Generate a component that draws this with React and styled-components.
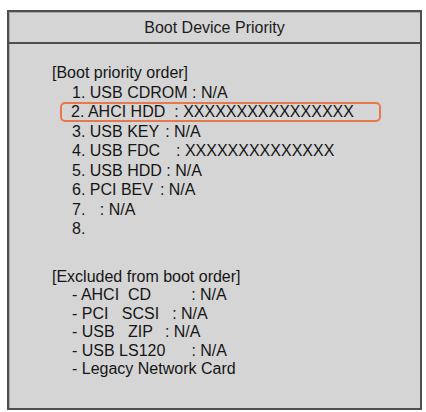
import styled, { createGlobalStyle } from "styled-components";

const GlobalStyle = createGlobalStyle`
  html, body {
    margin: 0;
    padding: 0;
    background: #fff;
  }

  body {
    font-family: "Liberation Sans", Arial, sans-serif;
  }
`;

const bootOrder = [
  { name: "1. USB CDROM", value: ": N/A", gap: 4.5 },
  { name: "2. AHCI HDD", value: ": XXXXXXXXXXXXXXXX", gap: 9, selected: true },
  { name: "3. USB KEY", value: ": N/A", gap: 6 },
  { name: "4. USB FDC", value: ": XXXXXXXXXXXXXX", gap: 16 },
  { name: "5. USB HDD", value: ": N/A", gap: 4.5 },
  { name: "6. PCI BEV", value: ": N/A", gap: 7 },
  { name: "7.", value: ": N/A", gap: 14.5 },
  { name: "8.", value: "", gap: 0 },
];

const excluded = [
  { name: "- AHCI  CD", value: ": N/A", gap: 40 },
  { name: "- PCI   SCSI", value: ": N/A", gap: 13 },
  { name: "- USB   ZIP", value: ": N/A", gap: 12 },
  { name: "- USB LS120", value: ": N/A", gap: 26 },
  { name: "- Legacy Network Card", value: "", gap: 0 },
];

const App = () => {
  return (
    <Page>
      <GlobalStyle />
      <Panel>
        <Header>Boot Device Priority</Header>
        <Body>
          <Section>
            <SectionTitle pitch={19.5}>[Boot priority order]</SectionTitle>
            {bootOrder.map((item) => (
              <Entry key={item.name} pitch={19.5} selected={item.selected}>
                <Name>{item.name}</Name>
                {item.value && <Value gap={item.gap}>{item.value}</Value>}
              </Entry>
            ))}
          </Section>
          <Section spaced>
            <SectionTitle pitch={18.4}>[Excluded from boot order]</SectionTitle>
            {excluded.map((item) => (
              <Entry key={item.name} pitch={18.4}>
                <Name>{item.name}</Name>
                {item.value && <Value gap={item.gap}>{item.value}</Value>}
              </Entry>
            ))}
          </Section>
        </Body>
      </Panel>
    </Page>
  );
};

export default App;

const Page = styled.div`
  width: 426px;
  height: 412px;
  padding: 10px 0 0 7px;
  box-sizing: border-box;
  background: #fff;
`;

const Panel = styled.div`
  width: 415px;
  height: 400px;
  box-sizing: border-box;
  display: flex;
  flex-direction: column;

  background: #d5d5d5;
  border: 2px solid #4f4f4f;
  box-shadow: inset 1px 1px 0 #a9a9a9;
  color: #151515;
`;

const Header = styled.div`
  height: 29px;
  padding-top: 1px;
  flex-shrink: 0;

  border-bottom: 2px solid #4f4f4f;
  text-align: center;
  font-size: 16px;
  line-height: 29px;
  color: #1c1c1c;
`;

const Body = styled.div`
  padding: 19px 0 0 43px;
  display: flex;
  flex-direction: column;
`;

const Section = styled.div`
  display: flex;
  flex-direction: column;
  margin-top: ${({ spaced }) => (spaced ? "29.5px" : "0")};
`;

const SectionTitle = styled.div`
  height: ${({ pitch }) => pitch}px;
  font-size: 16px;
  line-height: ${({ pitch }) => pitch}px;
  white-space: pre;
`;

const Entry = styled.div`
  display: flex;
  align-items: center;
  box-sizing: border-box;
  height: ${({ pitch }) => pitch}px;
  font-size: 16px;
  line-height: ${({ pitch, selected }) => (selected ? pitch - 4 : pitch)}px;
  white-space: pre;

  ${({ selected }) =>
    selected
      ? `
    width: 321px;
    margin-left: 8px;
    padding-left: 9px;
    border: 2px solid #e6784c;
    border-radius: 5px;
  `
      : `
    margin-left: 20px;
  `}
`;

const Name = styled.span``;

const Value = styled.span`
  margin-left: ${({ gap }) => gap}px;
`;
